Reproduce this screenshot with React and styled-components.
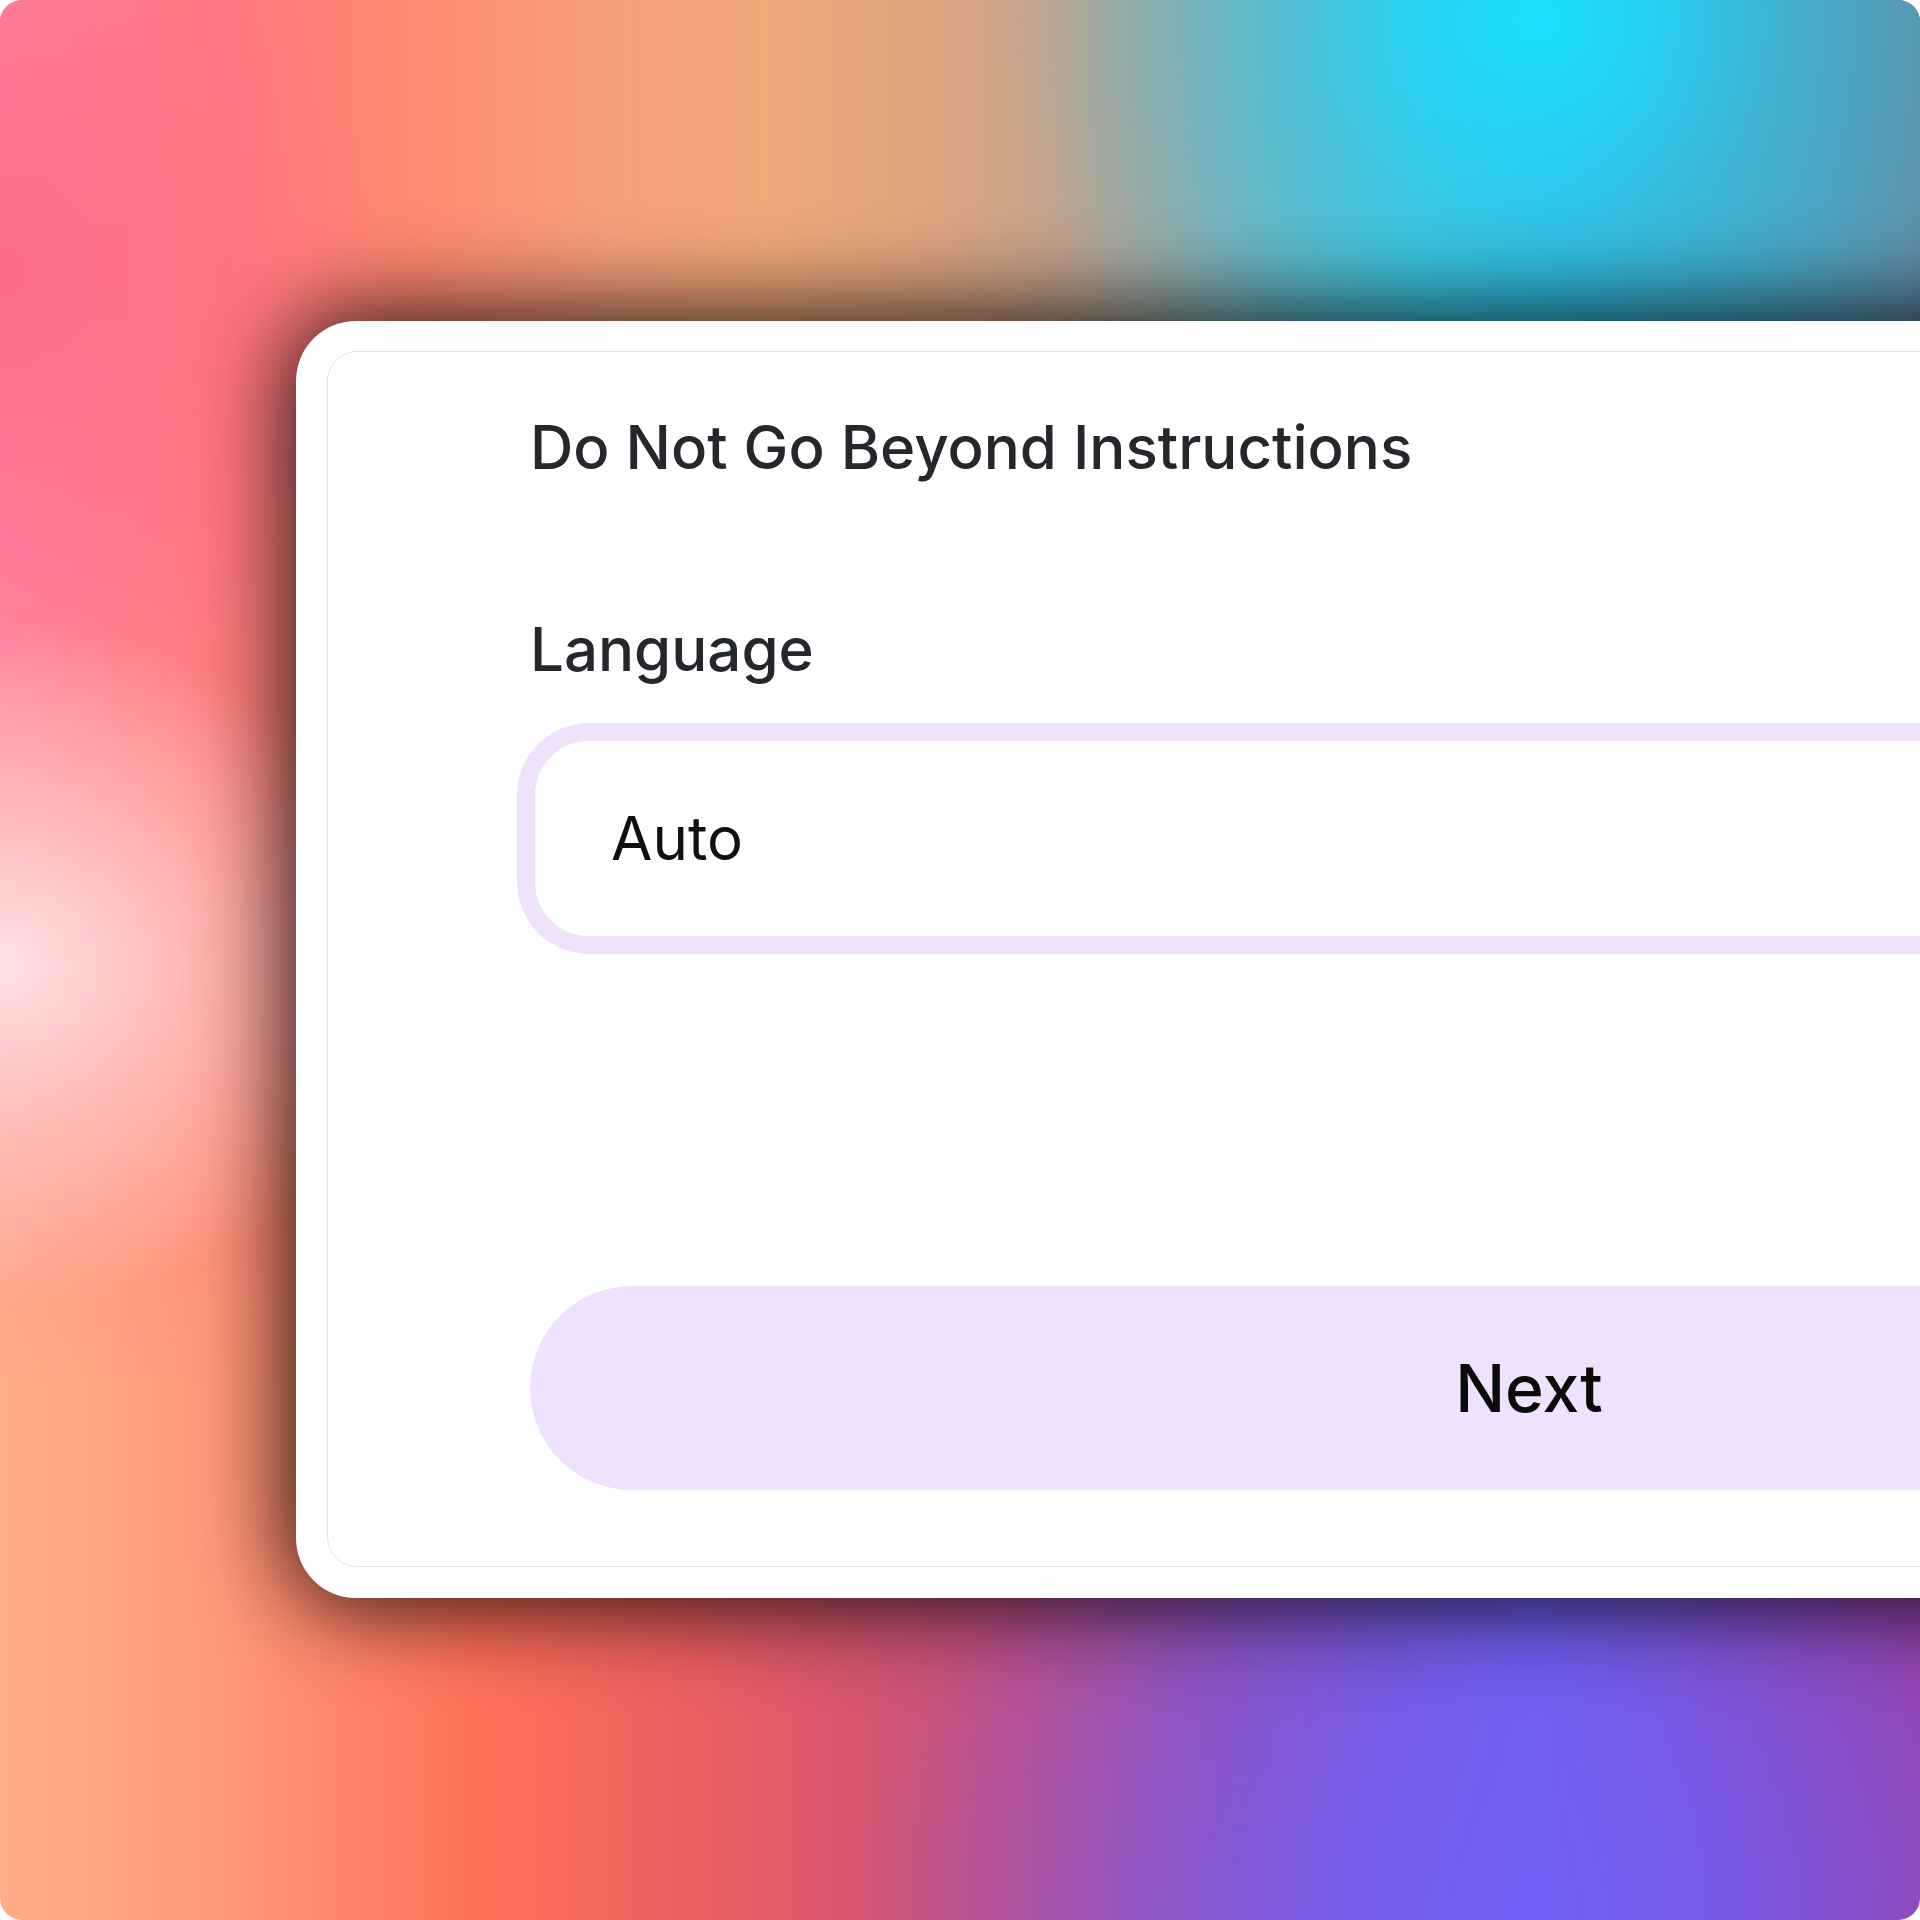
import React from "react";
import styled, { createGlobalStyle } from "styled-components";

const GlobalStyle = createGlobalStyle`
  html, body {
    margin: 0;
    padding: 0;
    background: #ffffff;
  }
  body {
    font-family: Inter, "Noto Sans", Arial, sans-serif;
  }
  * {
    box-sizing: border-box;
  }
`;

const App = () => {
  return (
    <>
      <GlobalStyle />
      <Frame>
        <Card>
          <Panel>
            <Title>Do Not Go Beyond Instructions</Title>
            <Label>Language</Label>
            <SelectBox>
              <SelectValue>Auto</SelectValue>
            </SelectBox>
            <NextButton type="button">Next</NextButton>
          </Panel>
        </Card>
      </Frame>
    </>
  );
};

export default App;

// background + framing
const Frame = styled.div`
  position: relative;
  width: 1920px;
  height: 1920px;
  border-radius: 22px;
  overflow: hidden;
  display: flex;
  align-items: flex-start;
  padding: 321px 0 0 296px;
  background:
    radial-gradient(ellipse 680px 500px at 1530px 1910px, rgba(112, 96, 248, 0.85) 0%, rgba(112, 96, 248, 0) 100%),
    linear-gradient(90deg, #ffae88 0%, #ff9a7a 11%, #ff7058 25%, #ef6060 35%, #d65670 45%, #ba5090 55%, #9650b4 64%, #7e58d8 73%, #7060f0 80%, #8c4cc0 91%, #a040a0 100%);

  &::before {
    content: "";
    position: absolute;
    inset: 0;
    background:
      radial-gradient(ellipse 540px 500px at 1540px 20px, rgba(26, 224, 255, 1) 0%, rgba(40, 200, 235, 0.45) 45%, rgba(40, 200, 235, 0) 100%),
      radial-gradient(ellipse 380px 440px at 0px 270px, rgba(255, 104, 132, 0.9) 0%, rgba(255, 104, 132, 0) 100%),
      linear-gradient(90deg, #ff84a2 0%, #ff7a7e 12%, #ff8a70 22%, #f5a07a 32%, #efa878 40%, #e0a47e 48%, #c4a38c 55%, #a0a8a2 61%, #72b4be 67%, #48c4dc 74%, #38bce0 81%, #4aa6c6 89%, #6888a0 100%);
    -webkit-mask-image: linear-gradient(180deg, #000 0%, #000 30%, rgba(0, 0, 0, 0.6) 48%, transparent 72%);
    mask-image: linear-gradient(180deg, #000 0%, #000 30%, rgba(0, 0, 0, 0.6) 48%, transparent 72%);
  }

  &::after {
    content: "";
    position: absolute;
    inset: 0;
    background: radial-gradient(ellipse 420px 340px at 0px 965px, rgba(255, 226, 228, 1) 0%, rgba(255, 208, 208, 0.7) 40%, rgba(255, 200, 200, 0) 100%);
  }
`;

const Card = styled.div`
  position: relative;
  z-index: 1;
  flex-shrink: 0;
  width: 2466px;
  height: 1277px;
  padding: 30px 31px 31px 31px;
  background: #ffffff;
  border-radius: 60px;
  box-shadow: 0 0 90px 8px rgba(0, 0, 0, 0.85);
`;

const Panel = styled.div`
  height: 100%;
  display: flex;
  flex-direction: column;
  padding: 59px 202px 0 202px;
  border: 1.5px solid #e3e3e6;
  border-radius: 30px;
`;

const Title = styled.h1`
  margin: 0;
  font-size: 60px;
  line-height: 1.22;
  font-weight: 500;
  color: #24272c;
`;

const Label = styled.div`
  margin-top: 129px;
  font-size: 60px;
  line-height: 1.22;
  font-weight: 500;
  color: #24272c;
`;

const SelectBox = styled.div`
  margin: 55px 5px 0 5px;
  height: 195px;
  display: flex;
  align-items: center;
  padding-left: 76px;
  background: #ffffff;
  border-radius: 54px;
  box-shadow: 0 0 0 18px #f1e2fc;
`;

const SelectValue = styled.span`
  font-size: 60px;
  line-height: 1.22;
  font-weight: 400;
  color: #101010;
`;

const NextButton = styled.button`
  margin-top: 350px;
  height: 204px;
  width: 100%;
  border: none;
  border-radius: 102px;
  background: #f0e1fc;
  font-family: Inter, "Noto Sans", Arial, sans-serif;
  font-size: 66px;
  line-height: 1.2;
  font-weight: 500;
  color: #0a0a0a;
  cursor: pointer;
`;
